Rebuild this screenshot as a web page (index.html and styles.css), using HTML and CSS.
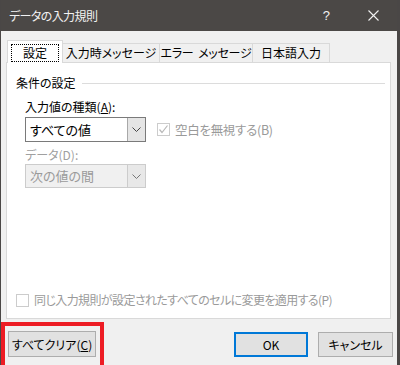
FILE: index.html
```html
<!DOCTYPE html>
<html lang="ja">
<head>
  <meta charset="UTF-8">
  <meta name="viewport" content="width=device-width, initial-scale=1.0">
  <title>データの入力規則</title>
  <link rel="stylesheet" href="styles.css">
</head>
<body>
  <div class="window">
    <div class="title-bar">
      <span class="title">データの入力規則</span>
      <span class="help">?</span>
      <svg class="close" width="11" height="11" viewBox="0 0 11 11">
        <path d="M0.5 0.5 L10.5 10.5 M10.5 0.5 L0.5 10.5" stroke="#f2f2f2" stroke-width="1.1" fill="none"/>
      </svg>
    </div>

    <div class="tabs">
      <div class="tab active"><span class="focus">設定</span></div>
      <div class="tab tab2">入力時メッセージ</div>
      <div class="tab tab3">エラー&nbsp; メッセージ</div>
      <div class="tab tab4">日本語入力</div>
    </div>

    <div class="panel">
      <div class="group-title">
        <span>条件の設定</span>
        <div class="group-line"></div>
      </div>

      <div class="field-label">入力値の種類(<u>A</u>):</div>
      <div class="row">
        <div class="select">
          <span class="select-text">すべての値</span>
          <span class="select-btn">
            <svg width="9" height="5" viewBox="0 0 9 5"><path d="M0.5 0.5 L4.5 4.5 L8.5 0.5" stroke="#444" fill="none"/></svg>
          </span>
        </div>
        <div class="check disabled">
          <span class="box checked">
            <svg width="11" height="11" viewBox="0 0 11 11"><path d="M1.5 5.5 L4 8.5 L9.5 1.5" stroke="#b8b8b8" stroke-width="1.2" fill="none"/></svg>
          </span>
          <span>空白を無視する(B)</span>
        </div>
      </div>

      <div class="field-label gray second">データ(D):</div>
      <div class="select disabled-select">
        <span class="select-text">次の値の間</span>
        <span class="select-btn">
          <svg width="9" height="5" viewBox="0 0 9 5"><path d="M0.5 0.5 L4.5 4.5 L8.5 0.5" stroke="#777" fill="none"/></svg>
        </span>
      </div>

      <div class="check disabled bottom-check">
        <span class="box"></span>
        <span class="tight">同じ入力規則が設定されたすべてのセルに変更を適用する(P)</span>
      </div>
    </div>

    <div class="footer">
      <div class="highlight">
        <button class="btn clear">すべてクリア(<u>C</u>)</button>
      </div>
      <div class="spacer"></div>
      <button class="btn ok">OK</button>
      <button class="btn cancel">キャンセル</button>
    </div>
  </div>
</body>
</html>
```

FILE: styles.css
```css
body {
  margin:0;
  padding:0;
  font-family:"Noto Sans CJK JP", "Noto Sans", sans-serif;
  font-size:12px;
  font-feature-settings:"palt";
  color:#000;
  white-space:nowrap;
}

.window {
  width:400px;
  height:365px;
  box-sizing:border-box;
  background:#f0f0f0;
  border-left:1px solid #4a4746;
  border-right:3px solid #4a4746;
  overflow:hidden;
}

.title-bar {
  height:31px;
  background:#4b4846;
  color:#f2f2f2;
  display:flex;
  align-items:center;
  padding-left:8px;
}
.title {
  flex:1;
  font-size:12px;
  line-height:16px;
  letter-spacing:-0.6px;
}
.help {
  font-family:"Liberation Sans", sans-serif;
  font-size:13px;
  margin-right:38px;
}
.close {
  margin-right:18px;
}

/* tabs */
.tabs {
  display:flex;
  align-items:flex-end;
  margin-top:9px;
  margin-left:6px;
  height:22px;
  position:relative;
  z-index:2;
}
.tab {
  height:19px;
  box-sizing:border-box;
  border:1px solid #d9d9d9;
  border-bottom:none;
  background:#f0f0f0;
  line-height:17px;
  text-align:center;
  margin-left:-1px;
}
.tab.active {
  height:23px;
  width:56px;
  margin-left:0;
  margin-bottom:-1px;
  background:#fff;
  padding:3px 3px 0 3px;
}
.focus {
  display:block;
  border:1px dotted #000;
  height:16px;
  line-height:15px;
}
.tab2 { width:98px; }
.tab3 { width:94px; letter-spacing:-0.3px; }
.tab4 { width:78px; }

/* panel */
.panel {
  margin-left:5px;
  width:385px;
  height:257px;
  box-sizing:border-box;
  background:#fff;
  border:1px solid #d9d9d9;
  padding:12px 0 10px 9px;
  display:flex;
  flex-direction:column;
  position:relative;
  z-index:1;
}
.group-title {
  display:flex;
  align-items:center;
  line-height:16px;
  color:#000;
}
.group-line {
  flex:1;
  height:1px;
  background:#dcdcdc;
  margin:1px 5px 0 6px;
}
.field-label {
  margin-left:9px;
  margin-top:8px;
  line-height:16px;
}
.field-label.second {
  margin-top:5px;
}
.gray {
  color:#a0a0a0;
}

.row {
  display:flex;
  align-items:center;
  margin-top:2px;
  margin-left:9px;
}
.select {
  width:121px;
  height:25px;
  box-sizing:border-box;
  border:1px solid #7a7a7a;
  background:#fff;
  display:flex;
}
.select-text {
  flex:1;
  padding-left:4px;
  line-height:23px;
  font-size:13px;
}
.select-btn {
  width:17px;
  background:#e5e5e5;
  border-left:1px solid #a8a8a8;
  display:flex;
  align-items:center;
  justify-content:center;
}
.disabled-select {
  height:24px;
  margin-left:9px;
  margin-top:1px;
  background:#f0f0f0;
  border-color:#cccccc;
  color:#9a9a9a;
}
.disabled-select .select-text {
  line-height:22px;
}
.disabled-select .select-btn {
  background:#e8e8e8;
  border-left-color:#cccccc;
}

.check {
  display:flex;
  align-items:center;
  line-height:16px;
}
.check.disabled {
  color:#9a9a9a;
}
.row .check {
  margin-left:11px;
  font-size:12.5px;
  letter-spacing:-0.3px;
}
.box {
  width:13px;
  height:13px;
  box-sizing:border-box;
  border:1px solid #cccccc;
  background:#fff;
  margin-right:5px;
  display:flex;
  align-items:center;
  justify-content:center;
}
.bottom-check {
  margin-top:auto;
  font-size:12px;
}
.tight {
  letter-spacing:-0.6px;
}

/* footer */
.footer {
  display:flex;
  align-items:flex-start;
  margin-top:3px;
  padding-right:4px;
}
.highlight {
  width:103px;
  height:50px;
  box-sizing:border-box;
  border:4px solid #ed1c24;
  padding:5px 0 0 3px;
}
.spacer {
  flex:1;
}
.btn {
  font-family:"Noto Sans CJK JP", "Noto Sans", sans-serif;
  font-size:12px;
  font-feature-settings:"palt";
  white-space:nowrap;
  background:#e1e1e1;
  border:1px solid #adadad;
  height:26px;
  padding:0;
  color:#000;
}
.clear {
  width:88px;
}
.ok {
  margin-top:10px;
  width:74px;
  height:25px;
  border:2px solid #0078d7;
}
.cancel {
  margin-top:10px;
  margin-left:10px;
  width:75px;
  height:25px;
}
```
